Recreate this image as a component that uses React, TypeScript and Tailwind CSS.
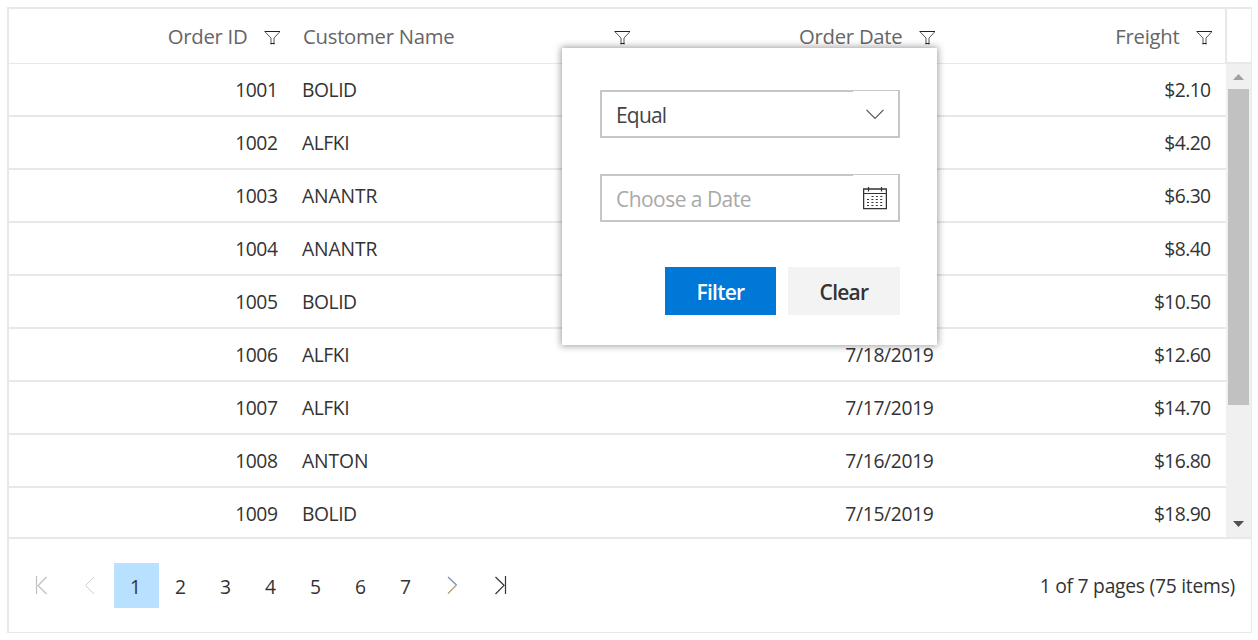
import React from "react";

type Row = { id: string; name: string; date?: string; freight: string };

const rows: Row[] = [
  { id: "1001", name: "BOLID", freight: "$2.10" },
  { id: "1002", name: "ALFKI", freight: "$4.20" },
  { id: "1003", name: "ANANTR", freight: "$6.30" },
  { id: "1004", name: "ANANTR", freight: "$8.40" },
  { id: "1005", name: "BOLID", freight: "$10.50" },
  { id: "1006", name: "ALFKI", date: "7/18/2019", freight: "$12.60" },
  { id: "1007", name: "ALFKI", date: "7/17/2019", freight: "$14.70" },
  { id: "1008", name: "ANTON", date: "7/16/2019", freight: "$16.80" },
  { id: "1009", name: "BOLID", date: "7/15/2019", freight: "$18.90" },
];

const columns = "grid grid-cols-[281px_352px_304px_280px]";

function Funnel() {
  return (
    <svg width="16" height="14" viewBox="0 0 16 14" fill="none" className="mt-[4px] block shrink-0">
      <path d="M.5 .5H16" stroke="#222" />
      <path d="M1.2 1 7 7V13.5M15.6 1 10 7V13.5" stroke="#444" strokeWidth=".9" />
      <path d="M6.5 12.5H10.5" stroke="#222" />
    </svg>
  );
}

function Calendar() {
  return (
    <svg width="24" height="23" viewBox="0 0 24 23" fill="none" className="block shrink-0" stroke="#333">
      <path d="M.6 2H23.4V21.7H.6Z" strokeWidth="1.3" />
      <path d="M1 6.5H23M5.5 0V4.5M18.5 0V4.5" strokeWidth="1.2" />
      <path d="M8.5 9.5H19.5M4 12.5H19.5M4 15.5H19.5M4 18.5H19.5" strokeWidth="1.2" strokeDasharray="2 2.4" />
    </svg>
  );
}

function Pager() {
  return (
    <div className="flex h-[92px] items-center pr-[16px]">
      <svg width="105" height="20" viewBox="9 575 105 20" fill="none" className="block shrink-0" stroke="#c0c0c0">
        <path d="M36.5 576V594M46.5 577 38 585.5 46.5 594" strokeWidth="1.2" />
        <path d="M94 577 85.5 585.5 94 594" stroke="#d0d0d0" />
      </svg>
      {["1", "2", "3", "4", "5", "6", "7"].map((n) => (
        <div
          key={n}
          className={
            n === "1"
              ? "flex h-[45px] w-[45px] items-center justify-center bg-[#b8e0ff] pt-[3px] pr-[2px]"
              : "flex h-[45px] w-[45px] items-center justify-center pt-[3px] pr-[2px]"
          }
        >
          {n}
        </div>
      ))}
      <svg width="90" height="20" viewBox="429 575 90 20" fill="none" className="block shrink-0">
        <path d="M448 577 456.5 585" stroke="#7593ba" strokeWidth="1.3" />
        <path d="M456.5 585 448 593.5" stroke="#bd9c6c" strokeWidth="1.3" />
        <path d="M495.5 577 504 585.3 495.5 594M505.5 576V594" stroke="#333" strokeWidth="1.2" />
      </svg>
      <span className="ml-auto pt-[2px] tracking-[-0.26px]">1 of 7 pages (75 items)</span>
    </div>
  );
}

function ThinEdge() {
  return <span className="absolute -top-px right-0 h-px w-[45px] bg-white" />;
}

function FilterPopup() {
  return (
    <div className="absolute top-[48px] left-[562px] h-[297px] w-[375px] bg-white pt-[42px] pr-[37px] pl-[38px] text-[21px] shadow-[0_0_7px_1px_rgba(0,0,0,0.38)]">
      <div className="relative flex h-[48px] items-center justify-between border-2 border-[#c6c6c6] pr-[14px] pl-[14px]">
        <span className="pt-[2px] tracking-[-0.8px] text-[#444]">Equal</span>
        <svg width="18" height="11" viewBox="0 0 18 11" fill="none" className="block">
          <path d="M.5 .8 9 9.5 17.5 .8" stroke="#555" strokeWidth="1.2" />
        </svg>
        <ThinEdge />
      </div>
      <div className="relative mt-[36px] flex h-[48px] items-center justify-between border-2 border-[#c6c6c6] pr-[11px] pl-[14px]">
        <span className="pt-[2px] tracking-[-0.54px] text-[#a9a9a9]">Choose a Date</span>
        <Calendar />
        <ThinEdge />
      </div>
      <div className="mt-[45px] flex justify-end gap-[12px] font-semibold tracking-[-0.75px]">
        <button className="h-[48px] w-[111px] bg-[#0078d7] pt-px text-white">Filter</button>
        <button className="h-[48px] w-[112px] bg-[#f3f3f3] pt-px text-[#333]">Clear</button>
      </div>
    </div>
  );
}

export default function App() {
  return (
    <div className="relative h-[640px] w-[1258px] overflow-hidden bg-white pt-[7px] pl-[7px] font-['Open_Sans','Noto_Sans',sans-serif] text-[19.3px] leading-[28px] text-[#333]">
      <div className="h-[626px] w-[1245px] border-t-2 border-r border-b border-l-2 border-[#e8e8e8]">
        <div className="flex h-[55px]">
          <div
            className={`${columns} w-[1217px] items-center border-b border-[#e8e8e8] pb-px text-[20.3px] tracking-[-0.25px] text-[#666]`}
          >
            <div className="flex items-center justify-end gap-[16px] pr-[10.5px]">
              <span>Order ID</span>
              <Funnel />
            </div>
            <div className="flex items-center justify-between pr-[12px] pl-[13px]">
              <span>Customer Name</span>
              <Funnel />
            </div>
            <div className="flex items-center justify-end gap-[16px] pr-[11.5px]">
              <span>Order Date</span>
              <Funnel />
            </div>
            <div className="flex items-center justify-end gap-[16px] pr-[14.5px]">
              <span>Freight</span>
              <Funnel />
            </div>
          </div>
          <div className="-ml-px flex-1 border-b-2 border-l-2 border-[#e8e8e8]" />
        </div>
        <div className="flex h-[473px]">
          <div className="w-[1217px] overflow-hidden">
            {rows.map((r) => (
              <div
                key={r.id}
                className={`${columns} -mt-px h-[54px] items-center border-b-2 border-[#e8e8e8] pt-[2px] tracking-[-0.45px]`}
              >
                <span className="pr-[12.5px] text-right">{r.id}</span>
                <span className={r.name.startsWith("AN") ? "pl-[12px] tracking-[-0.1px]" : "pl-[12px]"}>{r.name}</span>
                <span className="pr-[12.5px] text-right tracking-[-0.35px]">{r.date}</span>
                <span className="pr-[15.5px] text-right tracking-[-0.6px]">{r.freight}</span>
              </div>
            ))}
          </div>
          <div className="flex flex-1 flex-col items-center justify-between bg-[#f0f0f0] pt-[10px] pb-[10px]">
            <svg width="11" height="6" viewBox="0 0 11 6" className="block">
              <path d="M0 6 5.5 0 11 6Z" fill="#a0a0a0" />
            </svg>
            <div className="mt-[9px] mb-auto h-[316px] w-[21px] bg-[#c1c1c1]" />
            <svg width="11" height="6" viewBox="0 0 11 6" className="block">
              <path d="M0 0 5.5 6 11 0Z" fill="#505050" />
            </svg>
          </div>
        </div>
        <div className="border-t-2 border-[#e8e8e8]">
          <Pager />
        </div>
      </div>
      <FilterPopup />
    </div>
  );
}
